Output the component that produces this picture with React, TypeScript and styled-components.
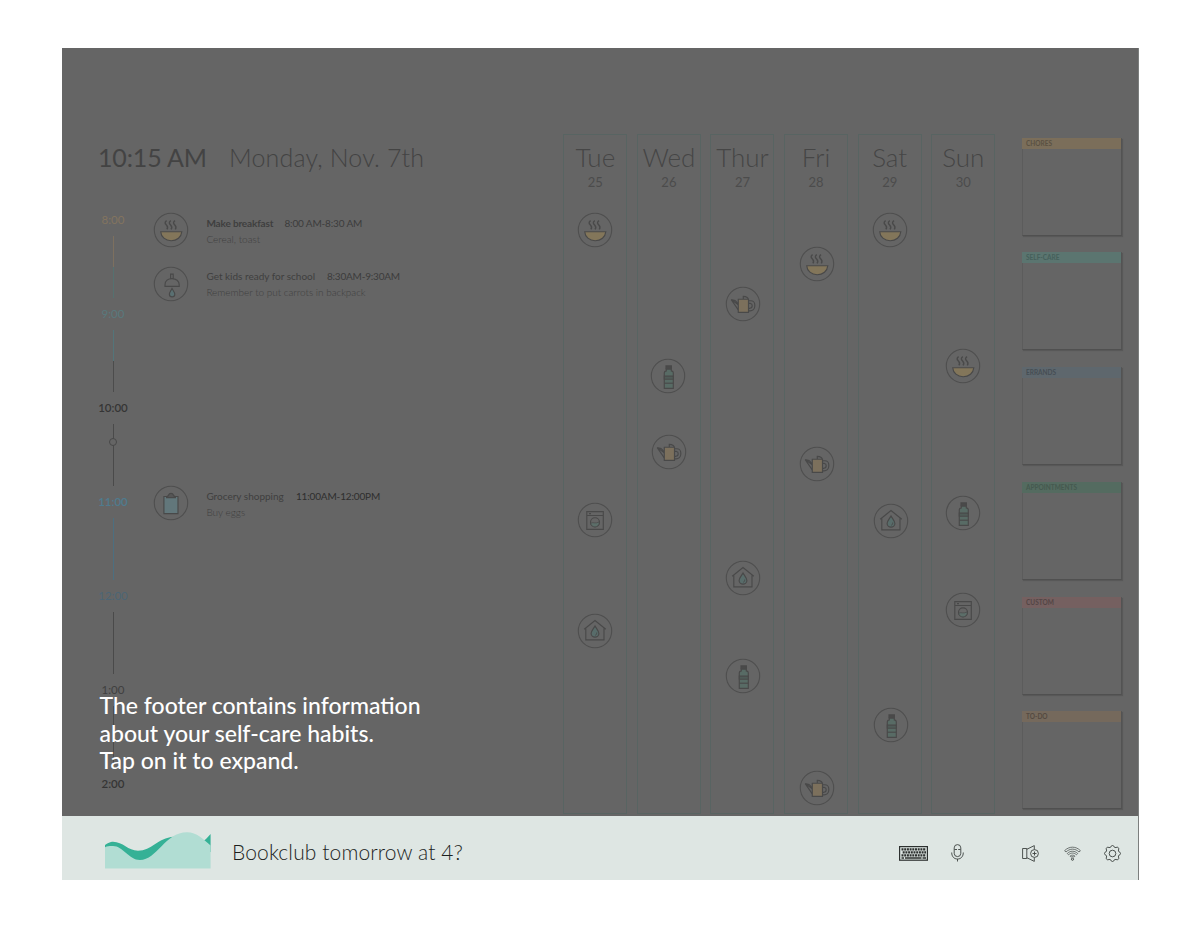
import React from "react";
import styled, { createGlobalStyle } from "styled-components";

const ink = "#494949";
const line = "#4f4f4f";

const GlobalStyle = createGlobalStyle`
  * { box-sizing: border-box; }
  body { margin: 0; background: #fff; font-family: Lato, "Liberation Sans", sans-serif; }
`;

const Page = styled.div`
  width: 1200px;
  height: 927px;
  padding: 48px 61px 47px 62px;
  overflow: hidden;
`;

const Screen = styled.main`
  position: relative;
  display: flex;
  flex-direction: column;
  width: 1077px;
  height: 831.5px;
  border-right: 1px solid #7c7f7e;
`;

const Board = styled.div`
  display: flex;
  height: 768px;
  background: #656565;
  overflow: hidden;
`;

const Today = styled.section`
  width: 501px;
  flex: none;
  padding: 93px 0 0 36px;
`;

const Heading = styled.header`
  display: flex;
  align-items: baseline;
  height: 32px;
  line-height: 32px;
  font-size: 25px;
  color: #434343;
  white-space: nowrap;
`;

const Clock = styled.span`
  width: 131px;
  font-weight: 400;
  letter-spacing: -0.15px;
`;

const DateText = styled.span`
  font-weight: 300;
  letter-spacing: 0.15px;
`;

const Agenda = styled.div`
  display: flex;
  margin-top: 38.5px;
`;

const Timeline = styled.div`
  width: 30px;
`;

const Hour = styled.div<{ $color: string; $bold?: boolean }>`
  height: 16px;
  line-height: 16px;
  text-align: center;
  font-size: 11.5px;
  font-weight: ${(p) => (p.$bold ? 600 : 400)};
  color: ${(p) => p.$color};
`;

const Segment = styled.div<{ $from: string; $to: string }>`
  position: relative;
  width: 1px;
  height: 62px;
  margin: 8px auto 8px 15px;
  background: linear-gradient(${(p) => p.$from} 50%, ${(p) => p.$to} 50%);
`;

const NowDot = styled.i`
  position: absolute;
  left: -4px;
  top: 14px;
  width: 8px;
  height: 8px;
  border: 1.2px solid #484848;
  border-radius: 50%;
  background: #656565;
`;

const Events = styled.div`
  padding-left: 26px;
`;

const EventRow = styled.div<{ $gap: number }>`
  display: flex;
  align-items: flex-start;
  height: 34px;
  margin-top: ${(p) => p.$gap}px;
  white-space: nowrap;
`;

const EventBody = styled.div<{ $lift: number }>`
  padding: ${(p) => 3.5 - p.$lift}px 0 0 18.4px;
`;

const EventTop = styled.div`
  display: flex;
  height: 14px;
  line-height: 14px;
  font-size: 10px;
  color: #3f3f3f;
`;

const EventTitle = styled.span<{ $w: number; $bold?: boolean; $track: number }>`
  width: ${(p) => p.$w}px;
  font-weight: ${(p) => (p.$bold ? 700 : 400)};
  letter-spacing: ${(p) => p.$track}px;
`;

const EventTime = styled.span<{ $track: number; $dark?: boolean }>`
  letter-spacing: ${(p) => p.$track}px;
  color: ${(p) => (p.$dark ? "#2e2e2e" : "#3c3c3c")};
`;

const EventNote = styled.div<{ $track: number }>`
  height: 14px;
  margin-top: 2px;
  line-height: 14px;
  font-size: 10px;
  font-weight: 300;
  color: #404040;
  letter-spacing: ${(p) => p.$track}px;
`;

const Week = styled.section`
  display: flex;
  gap: 9.6px;
  flex: none;
  width: 459px;
  padding: 85.5px 0 2px 0.3px;
`;

const Day = styled.div`
  display: flex;
  flex-direction: column;
  align-items: center;
  flex: none;
  width: 64px;
  border: 1px solid #586462;
`;

const DayName = styled.div`
  height: 32px;
  margin-top: 6.5px;
  line-height: 32px;
  font-size: 26px;
  font-weight: 300;
  color: #464646;
`;

const DayNumber = styled.div`
  height: 16px;
  margin-top: 0.5px;
  line-height: 16px;
  font-size: 13px;
  color: #4c4c4c;
`;

const Pins = styled.div`
  width: 34px;
  height: 0;
`;

const PinSlot = styled.div<{ $gap: number; $shift: number }>`
  height: 34px;
  margin: ${(p) => p.$gap}px 0 0 ${(p) => p.$shift}px;
`;

const IconSvg = styled.svg`
  display: block;
  flex: none;
  width: 34px;
  height: 34px;
  overflow: visible;
`;

const Lists = styled.aside`
  padding-top: 90px;
`;

const Card = styled.div<{ $gap: number }>`
  width: 100px;
  height: 98px;
  margin-top: ${(p) => p.$gap}px;
  border: 1px solid #5c5c5c;
  border-right: 1px solid #535353;
  border-bottom: 1px solid #505050;
  box-shadow: 1px 1px 1px #585858;
`;

const CardHead = styled.div<{ $bg: string; $fg: string }>`
  height: 11px;
  margin: -1px 0 0 -1px;
  padding-left: 4px;
  line-height: 11px;
  font-size: 6.5px;
  font-weight: 700;
  background: ${(p) => p.$bg};
  color: ${(p) => p.$fg};
`;

const Message = styled.p`
  position: absolute;
  left: 37.5px;
  top: 644.2px;
  margin: 0;
  font-size: 23px;
  line-height: 27.4px;
  font-weight: 500;
  color: #fff;
  white-space: nowrap;
`;

const Footer = styled.footer`
  display: flex;
  align-items: center;
  height: 63.5px;
  padding: 0 17px 0 43px;
  background: #dee6e3;
`;

const Waves = styled.svg`
  display: block;
  width: 106px;
  height: 37px;
  margin-top: 5px;
`;

const Reminder = styled.div`
  flex: 1;
  margin: 7.5px 0 0 21px;
  font-size: 21px;
  letter-spacing: 0.12px;
  font-weight: 300;
  line-height: 28px;
  color: #1c1f1e;
  white-space: nowrap;
`;

const Tools = styled.div`
  display: flex;
  align-items: center;
  margin-top: 11px;
`;

const ToolIcon = styled.svg<{ $gap?: number }>`
  display: block;
  margin-left: ${(p) => p.$gap ?? 0}px;
  fill: none;
  stroke: #3c4240;
  stroke-width: 0.9;
`;

type IconName = "bowl" | "pot" | "bottle" | "washer" | "house" | "shower" | "bag";

const drawings: Record<IconName, React.ReactNode> = {
  bowl: (
    <>
      <path d="M6.7 18.7H27.8C27.3 24 23 27.7 17.2 27.7S7.1 24 6.7 18.7Z" fill="#83765a" />
      {[11.6, 15.8, 20].map((x) => (
        <path key={x} d={`M${x + 1} 7.6c-2.2 1.6-1.6 3 -.2 4.3s1.4 3 .5 4.5`} strokeWidth="1.4" />
      ))}
    </>
  ),
  pot: (
    <>
      <path d="M12.3 17.7L5.2 12.6L12.3 22.8M5.2 12.6l3.8 1 3.3 3" />
      <path d="M17.3 12V9.4C20 9.4 22 10.5 22.3 12.5" />
      <path d="M22.5 13.7h2.3a4 4 0 0 1 4 4v1.6a4.7 4.7 0 0 1-4.7 4.5h-1.6M22.5 16.4h1.7q2 .3 2 2.2 0 2.6-2.2 2.7h-1.5" />
      <path d="M12.3 12.2H22.5V25.4H12.3Z" fill="#7c705c" />
    </>
  ),
  bottle: (
    <>
      <path d="M13.3 13.8q0-1.6 2-1.9V10h5v1.9q2 .3 2 1.9V29.3H13.3Z" fill="#586b65" />
      <path d="M15 6.9h5.4v3H15Z" fill="#4a4a4a" />
      <path d="M13.3 17.1h9v3.1h-9Z" fill="#4f5b57" />
      <path d="M13.3 24.2h9" />
    </>
  ),
  washer: (
    <>
      <path d="M8.8 8.6h16.5v17.8H8.8ZM8.8 12.5h16.5M11 10.6h2" />
      <circle cx="17" cy="19.3" r="4.5" />
      <path d="M12.7 20.2c2.2-1.5 4.3 1 8.6-1.3 0 6.5-8.2 6.2-8.6 1.3Z" fill="#5c6e69" strokeWidth="0.7" />
    </>
  ),
  house: (
    <>
      <path d="M6.2 15.2L17 6.5L27.8 15.2M7.8 14V25.8H26V14" />
      <path d="M17 12C15.3 15 13.1 17.2 13.1 19.5A3.9 3.6 0 0 0 20.9 19.5C20.9 17.2 18.7 15 17 12Z" fill="#586c6a" />
      <path d="M18.8 18.4q.4 2.4-1.8 3" strokeWidth="0.8" />
    </>
  ),
  shower: (
    <>
      <path d="M16.6 11.4V7.1h2.6v4.3M11 19.4v-1.7C11 14 14 11.6 18 11.6s7.2 2.4 7.2 6.1v1.7Z" />
      <path d="M18 21.5c-1.2 2.4-2.6 4-2.6 5.7a2.7 2.7 0 0 0 5.4 0c0-1.7-1.4-3.3-2.8-5.7Z" fill="#5a7072" />
    </>
  ),
  bag: (
    <>
      <path d="M9.9 10.5H24V27.6H9.9Z" fill="#62777b" />
      <path d="M12.6 10.5c1.2 0 1.7-.4 2-1.5.7-2.2 4.1-2.2 4.8 0 .3 1.1.8 1.5 2 1.5V11.6H12.6Z" fill="#565656" />
    </>
  ),
};

function RoundIcon({ name }: { name: IconName }) {
  return (
    <IconSvg viewBox="0 0 34 34" fill="none" stroke={ink} strokeWidth="1.15">
      <circle cx="17" cy="17" r="16.7" stroke={line} strokeWidth="1.1" />
      {drawings[name]}
    </IconSvg>
  );
}

const hours = [
  { label: "8:00", color: "#83745f", from: "#7d705f", to: "#557170" },
  { label: "9:00", color: "#59797d", from: "#53757a", to: "#4c4c4c" },
  { label: "10:00", color: "#353535", bold: true, from: "#4a4a4a", to: "#4a4a4a", now: true },
  { label: "11:00", color: "#4f7b8e", bold: true, from: "#4c6f80", to: "#4c6f80" },
  { label: "12:00", color: "#4c6575", from: "#4a4a4a", to: "#4a4a4a" },
  { label: "1:00", color: "#404040", from: "#4c4c4c", to: "#4c4c4c" },
  { label: "2:00", color: "#353535", bold: true },
];

const events = [
  { icon: "bowl", gap: 1, lift: 0, title: "Make breakfast", bold: true, w: 78, t1: -0.15, time: "8:00 AM-8:30 AM", t2: -0.15, note: "Cereal, toast", t3: 0 },
  { icon: "shower", gap: 20, lift: 0.7, title: "Get kids ready for school", w: 120.5, t1: 0, time: "8:30AM-9:30AM", t2: -0.2, note: "Remember to put carrots in backpack", t3: -0.03 },
  { icon: "bag", gap: 185, lift: 0, title: "Grocery shopping", w: 89.5, t1: 0, time: "11:00AM-12:00PM", t2: -0.15, dark: true, note: "Buy eggs", t3: 0 },
] as const;

// Each pin: icon, centre y within the board, and horizontal nudge.
const days: { name: string; date: number; pins: [IconName, number, number][] }[] = [
  { name: "Tue", date: 25, pins: [["bowl", 230, -0.8], ["washer", 520, 0], ["house", 631, 0]] },
  { name: "Wed", date: 26, pins: [["bottle", 375.5, -1], ["pot", 452, 0]] },
  { name: "Thur", date: 27, pins: [["pot", 304.3, 0.2], ["house", 578.3, 0.2], ["bottle", 676.5, 0.2]] },
  { name: "Fri", date: 28, pins: [["bowl", 264, 0.7], ["pot", 464.3, 0.7], ["pot", 787.8, 0.7]] },
  { name: "Sat", date: 29, pins: [["bowl", 229.5, 0.4], ["house", 520.7, 0.9], ["bottle", 725, 1.7]] },
  { name: "Sun", date: 30, pins: [["bowl", 366, -0.5], ["bottle", 513, -0.3], ["washer", 610, -0.3]] },
];

const PINS_TOP = 189.5;

const cards = [
  { title: "CHORES", gap: 0, bg: "#7b6e5a", fg: "#5a5142" },
  { title: "SELF-CARE", gap: 15.5, bg: "#5b7570", fg: "#45605b" },
  { title: "ERRANDS", gap: 17.2, bg: "#5e676d", fg: "#464e54" },
  { title: "APPOINTMENTS", gap: 17.8, bg: "#546b60", fg: "#45594f" },
  { title: "CUSTOM", gap: 17, bg: "#756060", fg: "#534545" },
  { title: "TO-DO", gap: 16, bg: "#75695c", fg: "#544a41" },
];

const keyRows = [848.5, 851.5, 854.5];

export default function App() {
  return (
    <Page>
      <GlobalStyle />
      <Screen>
        <Board>
          <Today>
            <Heading>
              <Clock>10:15 AM</Clock>
              <DateText>Monday, Nov. 7th</DateText>
            </Heading>
            <Agenda>
              <Timeline>
                {hours.map((h) => (
                  <React.Fragment key={h.label}>
                    <Hour $color={h.color} $bold={h.bold}>{h.label}</Hour>
                    {h.from && h.to && (
                      <Segment $from={h.from} $to={h.to}>{h.now && <NowDot />}</Segment>
                    )}
                  </React.Fragment>
                ))}
              </Timeline>
              <Events>
                {events.map((e) => (
                  <EventRow key={e.title} $gap={e.gap}>
                    <RoundIcon name={e.icon} />
                    <EventBody $lift={e.lift}>
                      <EventTop>
                        <EventTitle $w={e.w} $bold={"bold" in e} $track={e.t1}>{e.title}</EventTitle>
                        <EventTime $track={e.t2} $dark={"dark" in e}>{e.time}</EventTime>
                      </EventTop>
                      <EventNote $track={e.t3}>{e.note}</EventNote>
                    </EventBody>
                  </EventRow>
                ))}
              </Events>
            </Agenda>
          </Today>
          <Week>
            {days.map((d) => (
              <Day key={d.name}>
                <DayName>{d.name}</DayName>
                <DayNumber>{d.date}</DayNumber>
                <Pins>
                  {d.pins.map(([icon, y, dx], i) => (
                    <PinSlot
                      key={y}
                      $gap={i === 0 ? y - 17 - PINS_TOP : y - d.pins[i - 1][1] - 34}
                      $shift={dx}
                    >
                      <RoundIcon name={icon} />
                    </PinSlot>
                  ))}
                </Pins>
              </Day>
            ))}
          </Week>
          <Lists>
            {cards.map((c) => (
              <Card key={c.title} $gap={c.gap}>
                <CardHead $bg={c.bg} $fg={c.fg}>{c.title}</CardHead>
              </Card>
            ))}
          </Lists>
        </Board>
        <Footer>
          <Waves viewBox="0 0 106 37">
            <path d="M0 13C4 10 7 9.7 8 9.7C18 9.7 23 18.7 33 18.7C47 18.7 52 6 69 4.7L80 10H97L101 7L105.6 2V20H96L60 28H20L0 17Z" fill="#35b196" />
            <path d="M0 15.3C3 13.8 5 14 8 14C18 14 24 28 35 28C52 28 60 0.2 82 0.2C92 0.2 98 7 105.6 13.5V36.5H0Z" fill="#b1ddd3" />
          </Waves>
          <Reminder>Bookclub tomorrow at 4?</Reminder>
          <Tools>
            <ToolIcon width="29" height="15" viewBox="899 846 29 15">
              <rect x="899.6" y="846.6" width="27.8" height="13.6" stroke="#2c302f" strokeWidth="1.2" />
              {keyRows.map((y, i) => (
                <path key={y} d={`M${901.5 + (i % 2) * 1.2} ${y + 0.8}H926`} stroke="#2c302f" strokeWidth="2.2" strokeDasharray="2 0.7" />
              ))}
              <path d="M901.5 858H904M905 858H921.5M922.5 858H926" stroke="#2c302f" strokeWidth="1.3" />
            </ToolIcon>
            <ToolIcon $gap={23} width="13" height="18" viewBox="0 0 13 18">
              <rect x="3.2" y="0.6" width="6.6" height="12" rx="3.3" />
              <path d="M0.7 8.5C0.7 12.5 3 15 6.5 15S12.3 12.5 12.3 8.5M6.5 15V17.5M3.5 5.5H6M7.2 5.5H9.5" />
            </ToolIcon>
            <ToolIcon $gap={58} width="17" height="17" viewBox="0 0 17 17">
              <path d="M0.6 3.5H4.8V13.5H0.6ZM4.8 4.3L12.3 0.6V4.5M4.8 12.7L12.3 16.4V12.5" />
              <circle cx="12.5" cy="8.5" r="3.9" />
              <path d="M12.5 6.5V10.5M10.5 8.5H14.5" />
            </ToolIcon>
            <ToolIcon $gap={24.5} width="17" height="15" viewBox="0 0 17 15">
              <path d="M0.6 4.7C5 0 12 0 16.4 4.7L15 6C11.3 2.2 5.7 2.2 2 6ZM3.3 7.5C6.2 4.5 10.8 4.5 13.7 7.5L12.4 8.8C10.2 6.5 6.8 6.5 4.6 8.8ZM6 10.2C7.5 8.8 9.5 8.8 11 10.2L10 11.2C9 10.4 8 10.4 7 11.2Z" strokeWidth="0.7" />
              <circle cx="8.5" cy="13.2" r="1.1" />
            </ToolIcon>
            <ToolIcon $gap={23.5} width="17" height="17" viewBox="0 0 17 17">
              <path d="M6.9 1.9Q7.2 0.5 8.5 0.5T10.1 1.9Q10.9 2.9 12 2.5Q13.4 1.7 14.3 2.7T14.5 5Q14.1 6.2 15.1 6.9Q16.5 7.2 16.5 8.5T15.1 10.1Q14.1 10.9 14.5 12Q15.3 13.4 14.3 14.3T12 14.5Q10.8 14.1 10.1 15.1Q9.8 16.5 8.5 16.5T6.9 15.1Q6.1 14.1 5 14.5Q3.6 15.3 2.7 14.3T2.5 12Q2.9 10.8 1.9 10.1Q0.5 9.8 0.5 8.5T1.9 6.9Q2.9 6.1 2.5 5Q1.7 3.6 2.7 2.7T5 2.5Q6.2 2.9 6.9 1.9Z" />
              <circle cx="8.5" cy="8.5" r="3.3" />
            </ToolIcon>
          </Tools>
        </Footer>
        <Message>
          The footer contains information
          <br />
          about your self-care habits.
          <br />
          Tap on it to expand.
        </Message>
      </Screen>
    </Page>
  );
}
